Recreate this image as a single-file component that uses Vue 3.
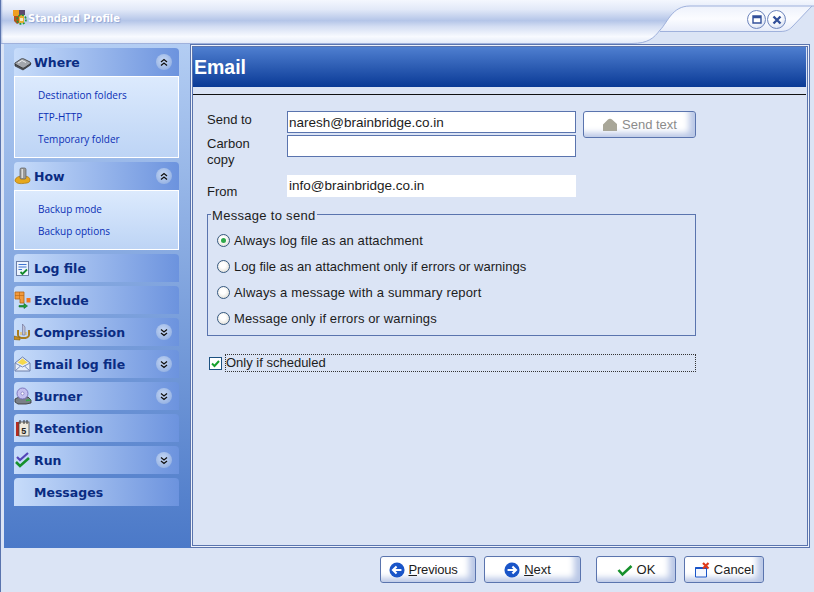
<script setup>
const sections = [
  { name: 'Where', icon: 'where', chevron: 'up', links: ['Destination folders', 'FTP-HTTP', 'Temporary folder'] },
  { name: 'How', icon: 'how', chevron: 'up', links: ['Backup mode', 'Backup options'] },
  { name: 'Log file', icon: 'log' },
  { name: 'Exclude', icon: 'exclude' },
  { name: 'Compression', icon: 'compression', chevron: 'down' },
  { name: 'Email log file', icon: 'email', chevron: 'down' },
  { name: 'Burner', icon: 'burner', chevron: 'down' },
  { name: 'Retention', icon: 'retention' },
  { name: 'Run', icon: 'run', chevron: 'down' },
  { name: 'Messages' },
]
const radios = [
  { text: 'Always log file as an attachment', spacing: 0.1 },
  { text: 'Log file as an attachment only if errors or warnings', spacing: 0.02 },
  { text: 'Always a message with a summary report', spacing: 0.18 },
  { text: 'Message only if errors or warnings', spacing: 0.12 },
]
</script>

<template>
  <div class="window">
    <header class="titlebar">
      <svg class="chrome" width="814" height="44" viewBox="0 0 814 44">
        <defs>
          <linearGradient id="tb" x1="0" y1="0" x2="0" y2="1">
            <stop offset="0" stop-color="#f4f7fe" />
            <stop offset="0.22" stop-color="#e2e9f8" />
            <stop offset="0.48" stop-color="#b4c5e8" />
            <stop offset="0.62" stop-color="#d4def3" />
            <stop offset="0.85" stop-color="#f8faff" />
            <stop offset="1" stop-color="#e4eaf8" />
          </linearGradient>
          <linearGradient id="tab" x1="0" y1="0" x2="0" y2="1">
            <stop offset="0" stop-color="#eef2fc" />
            <stop offset="0.5" stop-color="#fbfcff" />
            <stop offset="1" stop-color="#e6ebf9" />
          </linearGradient>
          <linearGradient id="edge" x1="0" y1="0" x2="1" y2="0">
            <stop offset="0" stop-color="#8ea4d4" />
            <stop offset="1" stop-color="#8ea4d4" stop-opacity="0" />
          </linearGradient>
        </defs>
        <rect width="814" height="44" fill="#dbe4f5" />
        <path d="M0 0H814V6H690C672 6 668 22 660 30C654 38 648 43 632 43H0Z" fill="url(#tb)" />
        <rect width="3" height="43" fill="url(#edge)" />
        <path d="M690 6H812L792 27C789 30 786 31.500 780 31.500H660C668 22 672 6 690 6Z" fill="url(#tab)" />
        <path d="M0 43.500H632C648 43.500 654 38 660 30C668 22 672 6 690 6H814M660 31.500H780C786 31.500 789 30 792 27L812 6" fill="none" stroke="#9fb1dc" />
      </svg>
      <svg class="app-icon" width="16" height="17" viewBox="0 0 16 17">
        <path d="M1 1H7V7H1Z" fill="#ef9f22" />
        <path d="M7 1H13V6H7Z" fill="#5b4a70" />
        <path d="M2 7H7V14L5 15L2 12Z" fill="#b4541c" />
        <path d="M7 6H12V14H7Z" fill="#e6b030" />
        <circle cx="9.500" cy="10.500" r="4.500" fill="none" stroke="#1f9a3a" stroke-width="1.600" stroke-dasharray="2 1.500" />
        <path d="M8 9H11V12H8Z" fill="#f6e8c0" />
      </svg>
      <span class="title">Standard Profile</span>
      <div class="win-buttons">
        <button class="win-btn" aria-label="Maximize">
          <svg width="10" height="9" viewBox="0 0 10 9"><path d="M1 1H9V8H1Z M1 2.500H9" fill="none" stroke="#33509a" stroke-width="1.400" /></svg>
        </button>
        <button class="win-btn" aria-label="Close">
          <svg width="10" height="10" viewBox="0 0 10 10"><path d="M1.500 1.500L8.500 8.500M8.500 1.500L1.500 8.500" stroke="#33509a" stroke-width="2.400" /></svg>
        </button>
      </div>
    </header>

    <div class="main">
      <nav class="sidebar">
        <section v-for="s in sections" :key="s.name" class="section">
          <div class="section-head">
            <svg v-if="s.icon" class="sec-icon" width="18" height="18" viewBox="0 0 18 18">
              <template v-if="s.icon === 'where'">
                <path d="M1 10L7 6C8 5.500 9 5.500 10 6L16 9C17 10 17 11 16 11.500L11 15C10 15.500 9 15.500 8 15L2 12C1 11.500 .5 10.500 1 10Z" fill="#a2a6ac" stroke="#333" stroke-width=".8" />
                <path d="M1 11V13L9 17L16.500 12V10.500L10 15C9.500 15.300 8.500 15.300 8 15Z" fill="#55585f" stroke="#222" stroke-width=".6" />
                <path d="M4 10L8 7.500L12 9.500" stroke="#eceef0" fill="none" />
              </template>
              <template v-else-if="s.icon === 'how'">
                <path d="M1 13C2 10 5 9 9 9C13 9 16 10 16 13C16 16 13 16 9 16.500C5 17 1 16 1 13Z" fill="#e6a81e" stroke="#a87410" stroke-width=".7" />
                <rect x="6" y="1" width="6" height="11" rx="1.500" fill="#9a9a98" stroke="#5c5c5c" stroke-width=".7" />
                <rect x="7.500" y="2" width="1.500" height="9" fill="#dcdcdc" />
              </template>
              <template v-else-if="s.icon === 'log'">
                <rect x="2.500" y="2.500" width="12" height="14" fill="#eef4fd" stroke="#6c7fa8" />
                <path d="M4.500 5.500H12.500M4.500 8H12.500M4.500 10.500H8" stroke="#3f74d0" />
                <path d="M6.500 13L8.500 15L13 10.500" fill="none" stroke="#138a2a" stroke-width="1.800" />
              </template>
              <template v-else-if="s.icon === 'exclude'">
                <path d="M1 1H10V12H6V8H1Z" fill="#f29a3c" stroke="#b46414" stroke-width=".8" />
                <path d="M1 4.500H10M5.500 1V8" stroke="#b46414" stroke-width=".6" />
                <rect x="12.500" y="7" width="4" height="4.500" fill="#f0761e" />
                <path d="M5 14.500H10V12.500L13.500 15L10 17.500V16H5Z" fill="#22a03a" stroke="#0f6d22" stroke-width=".6" />
              </template>
              <template v-else-if="s.icon === 'compression'">
                <path d="M4 7V12C4 14 7 15 9.500 15C12 15 15 14 15 12V7" fill="none" stroke="#a87c20" stroke-width="2" />
                <path d="M7 9V12M12 9V12" stroke="#e8c060" stroke-width="1.400" />
                <path d="M8.500 1L11 4V12H8.500Z" fill="#c0c4d8" stroke="#6a6a90" stroke-width=".6" />
                <path d="M0 13L6 14.500V17L0 16.500Z" fill="#c68c20" stroke="#7a5a14" stroke-width=".6" />
              </template>
              <template v-else-if="s.icon === 'email'">
                <path d="M1 8L8.500 2L16 8V16H1Z" fill="#e6eefb" stroke="#6c7fa8" />
                <path d="M3.500 7.500L8.500 3.500L13.500 7.500L8.500 10Z" fill="#f5d94e" />
                <path d="M1 8L8.500 12L16 8M1 16L6.500 11M16 16L10.500 11" fill="none" stroke="#7c90bc" />
              </template>
              <template v-else-if="s.icon === 'burner'">
                <path d="M1 12L5 10H14L17 13V16L12 17H4L1 15Z" fill="#7a8088" stroke="#333" stroke-width=".8" />
                <path d="M12 13.500L16.500 13" stroke="#32b04a" stroke-width="1.500" />
                <circle cx="8.500" cy="6.500" r="5.500" fill="#c4c0ee" stroke="#6a62b0" stroke-width=".8" />
                <circle cx="8.500" cy="6.500" r="1.500" fill="#fff" stroke="#6a62b0" stroke-width=".6" />
              </template>
              <template v-else-if="s.icon === 'retention'">
                <rect x="2" y="3" width="4" height="14" fill="#b62c20" />
                <rect x="5" y="3" width="10" height="14" fill="#eee9dc" stroke="#444" stroke-width=".8" />
                <path d="M6 1V5M10 1V5M13 1V5" stroke="#333" />
                <text x="7.300" y="14.500" class="cal-num">5</text>
              </template>
              <template v-else-if="s.icon === 'run'">
                <path d="M3 6L6 9L14 2" fill="none" stroke="#5546b8" stroke-width="2.200" />
                <path d="M2 11L6 15L15 7" fill="none" stroke="#16902c" stroke-width="2.600" />
              </template>
            </svg>
            <span class="sec-name">{{ s.name }}</span>
            <span v-if="s.chevron" class="chev" :class="{ down: s.chevron === 'down' }">
              <svg width="8" height="9" viewBox="0 0 8 9"><path d="M1 4L4 1.500L7 4M1 7.500L4 5L7 7.500" fill="none" stroke="#111" stroke-width="1.300" /></svg>
            </span>
          </div>
          <ul v-if="s.links" class="links">
            <li v-for="l in s.links" :key="l">{{ l }}</li>
          </ul>
        </section>
      </nav>

      <div class="panel">
        <div class="panel-inner">
          <h1 class="panel-title">Email</h1>
          <div class="rule"></div>

          <div class="form">
            <label class="lbl">Send to</label>
            <div class="input">naresh@brainbridge.co.in</div>
            <button class="btn send" disabled>
              <svg width="16" height="14" viewBox="0 0 16 14"><path d="M1 13V6.500L6 1.500C7 .5 9 .5 10 1.500L15 6V13Z" fill="#a8a698" /></svg>
              Send text
            </button>
            <label class="lbl cc-lbl">Carbon copy</label>
            <div class="input cc-input"></div>
            <label class="lbl from-lbl">From</label>
            <div class="input plain">info@brainbridge.co.in</div>
          </div>

          <fieldset class="group">
            <legend>Message to send</legend>
            <label v-for="(r, i) in radios" :key="r.text" class="radio-row" :style="{ letterSpacing: r.spacing + 'px' }">
              <span class="radio" :class="{ on: i === 0 }"></span>
              {{ r.text }}
            </label>
          </fieldset>

          <div class="check-row">
            <span class="check">
              <svg width="11" height="11" viewBox="0 0 11 11"><path d="M2 5.500L4.500 8L9 3" fill="none" stroke="#16a02c" stroke-width="2" /></svg>
            </span>
            <span class="check-label">Only if scheduled</span>
          </div>
        </div>
      </div>
    </div>

    <footer class="footer">
      <button class="btn prev">
        <svg width="16" height="16" viewBox="0 0 18 18"><circle cx="9" cy="9" r="8.500" fill="#1a55c8" /><path d="M14 9H5M8.500 5L4.500 9L8.500 13" fill="none" stroke="#fff" stroke-width="2.400" /></svg>
        <span class="prev-text"><u>P</u>revious</span>
      </button>
      <button class="btn next">
        <svg width="16" height="16" viewBox="0 0 18 18"><circle cx="9" cy="9" r="8.500" fill="#1a55c8" /><path d="M4 9H13M9.500 5L13.500 9L9.500 13" fill="none" stroke="#fff" stroke-width="2.400" /></svg>
        <span><u>N</u>ext</span>
      </button>
      <button class="btn ok">
        <svg width="16" height="14" viewBox="0 0 16 14"><path d="M1.500 7L5.500 11.500L14.500 3" fill="none" stroke="#16902c" stroke-width="2.600" /></svg>
        <span>OK</span>
      </button>
      <button class="btn cancel">
        <svg width="16" height="16" viewBox="0 0 16 16"><path d="M1.500 5.500H12.500V15H1.500Z" fill="#f4f7fe" stroke="#1a55c8" /><path d="M1.500 6H12.500" stroke="#1a55c8" stroke-width="2" /><path d="M9 1L14.500 6.500M14.500 1L9 6.500" stroke="#e03a18" stroke-width="2.200" /></svg>
        <span>Cancel</span>
      </button>
    </footer>
  </div>
</template>

<style>
html, body { margin: 0; background: #dbe4f5; }
</style>

<style scoped>
.window {
  width: 814px;
  height: 592px;
  overflow: hidden;
  box-sizing: border-box;
  display: flex;
  flex-direction: column;
  background: #dbe4f5;
  font-family: "Liberation Sans", Arial, sans-serif;
  font-size: 13px;
  color: #1c1c1c;
  border-left: 1px solid #5a74ae;
}
.titlebar {
  height: 44px;
  flex: none;
  position: relative;
  display: flex;
  align-items: flex-start;
  margin-left: -1px;
}
.chrome { position: absolute; left: 0; top: 0; }
.app-icon { position: relative; margin: 9px 0 0 12px; }
.title {
  position: relative;
  margin: 12px 0 0 0;
  color: #fff;
  font-family: "DejaVu Sans", sans-serif;
  font-weight: 700;
  font-size: 10px;
  line-height: 14px;
  text-shadow: 1px 1px 1px #8ea4d4;
}
.win-buttons {
  position: absolute;
  left: 747px;
  top: 10px;
  display: flex;
  gap: 1px;
}
.win-btn {
  width: 19px;
  height: 19px;
  padding: 0;
  border-radius: 50%;
  border: 1px solid #6f86bd;
  background: radial-gradient(circle at 40% 30%, #ffffff 40%, #c7d3ee 100%);
  display: flex;
  align-items: center;
  justify-content: center;
}
.main { flex: 1; display: flex; min-height: 0; padding-left: 3px; }
.sidebar {
  width: 186px;
  height: 504px;
  flex: none;
  box-sizing: border-box;
  padding: 4px 11px 0 10px;
  display: flex;
  flex-direction: column;
  gap: 4px;
  background: linear-gradient(#b3cdf3, #4b79c8);
}
.section-head {
  height: 28px;
  display: flex;
  align-items: center;
  position: relative;
  border-radius: 4px 4px 0 0;
  background: linear-gradient(90deg, #c7dcfa, #6c93de);
  color: #0a2c82;
  font-family: "DejaVu Sans", sans-serif;
  font-weight: 700;
  font-size: 12.500px;
}
.sec-icon { position: absolute; left: 0; top: 5px; }
.sec-name { margin-left: 20px; }
.chev {
  position: absolute;
  right: 7px;
  top: 6px;
  width: 16px;
  height: 16px;
  border-radius: 50%;
  background: radial-gradient(circle at 45% 40%, #c6d8f5, #86a6de);
  display: flex;
  align-items: center;
  justify-content: center;
}
.chev.down svg { transform: scaleY(-1); }
.links {
  margin: 0;
  padding: 7px 0 7px 23px;
  list-style: none;
  border: 1px solid #fff;
  background: linear-gradient(#dceafd, #bdd4f5);
  color: #0b2fb5;
  font-family: "Open Sans", sans-serif;
  font-size: 10px;
}
.links li { height: 22px; line-height: 22px; }
.panel {
  width: 620px;
  height: 504px;
  flex: none;
  box-sizing: border-box;
  border: 1px solid #5a74ae;
  padding: 1px;
  background: #eef2fb;
}
.panel-inner {
  height: 100%;
  box-sizing: border-box;
  border: 1px solid #5a74ae;
  background: #dbe4f5;
}
.panel-title {
  margin: 0;
  width: 613px;
  height: 40px;
  padding-left: 1px;
  box-sizing: border-box;
  background: linear-gradient(#4f7fd0, #0a3a96);
  color: #fff;
  font-size: 19.500px;
  font-weight: 700;
  line-height: 40px;
}
.rule { width: 613px; height: 1px; background: #111; margin-top: 7px; }
.form {
  margin: 16px 0 0 14px;
  width: 489px;
  display: grid;
  grid-template-columns: 80px 289px 113px;
  align-items: start;
}
.lbl { line-height: 16px; width: 60px; padding-top: 1px; }
.input {
  box-sizing: border-box;
  height: 22px;
  line-height: 21px;
  padding-left: 1px;
  background: #fff;
  border: 1px solid #5a74ae;
  font-size: 13.500px;
}
.cc-lbl, .cc-input { margin-top: 2px; }
.from-lbl { grid-column: 1; padding-top: 9px; margin-top: 7px; }
.plain { border: 0; padding: 1px 0 0 2px; margin-top: 7px; grid-column: 2; line-height: 19px; }
.btn {
  box-sizing: border-box;
  height: 27px;
  padding: 0;
  display: inline-flex;
  align-items: center;
  justify-content: center;
  gap: 4px;
  border: 1px solid #5a74ae;
  border-radius: 3px;
  background: #fff;
  box-shadow: inset -6px -4px 6px #b9c7e6;
  font-family: "Liberation Sans", Arial, sans-serif;
  font-size: 13px;
  color: #1c1c1c;
}
.send {
  grid-row: 1 / span 2;
  grid-column: 3;
  width: 113px;
  margin-left: 7px;
  color: #8b8b8b;
}
.group {
  margin: 6px 0 0 14px;
  padding: 5px 0 0 9px;
  width: 489px;
  height: 130px;
  box-sizing: border-box;
  border: 1px solid #5a74ae;
  display: flex;
  flex-direction: column;
}
.group legend { padding: 4px 1px 0; margin-left: -6px; line-height: 12px; letter-spacing: .3px; }
.radio-row {
  height: 26px;
  flex: none;
  display: flex;
  align-items: center;
  gap: 4px;
}
.radio {
  width: 13px;
  height: 13px;
  box-sizing: border-box;
  border-radius: 50%;
  border: 1px solid #37597f;
  background: radial-gradient(circle at 45% 40%, #fff 30%, #d4d2c8 100%);
  display: flex;
  align-items: center;
  justify-content: center;
}
.radio.on::after {
  content: "";
  width: 5px;
  height: 5px;
  border-radius: 50%;
  background: #2ea84a;
}
.check-row {
  margin: 18px 0 0 16px;
  width: 487px;
  display: flex;
  align-items: center;
  gap: 3px;
}
.check {
  width: 13px;
  height: 13px;
  box-sizing: border-box;
  flex: none;
  border: 1px solid #1c5180;
  background: #fff;
  display: flex;
  align-items: center;
  justify-content: center;
}
.check-label {
  flex: 1;
  height: 18px;
  line-height: 16px;
  box-sizing: border-box;
  border: 1px dotted #333;
}
.cal-num { font-family: "Liberation Sans", sans-serif; font-size: 9px; font-weight: 700; fill: #222; }
.footer { height: 44px; flex: none; display: flex; padding: 8px 0 0 379px; box-sizing: border-box; }
.footer .btn { flex: none; }
.prev { width: 96px; margin-right: 8px; padding-right: 10px; }
.prev-text { letter-spacing: -.2px; }
.next { width: 97px; margin-right: 15px; padding-right: 10px; }
.ok { width: 80px; margin-right: 8px; }
.cancel { width: 80px; }
</style>
